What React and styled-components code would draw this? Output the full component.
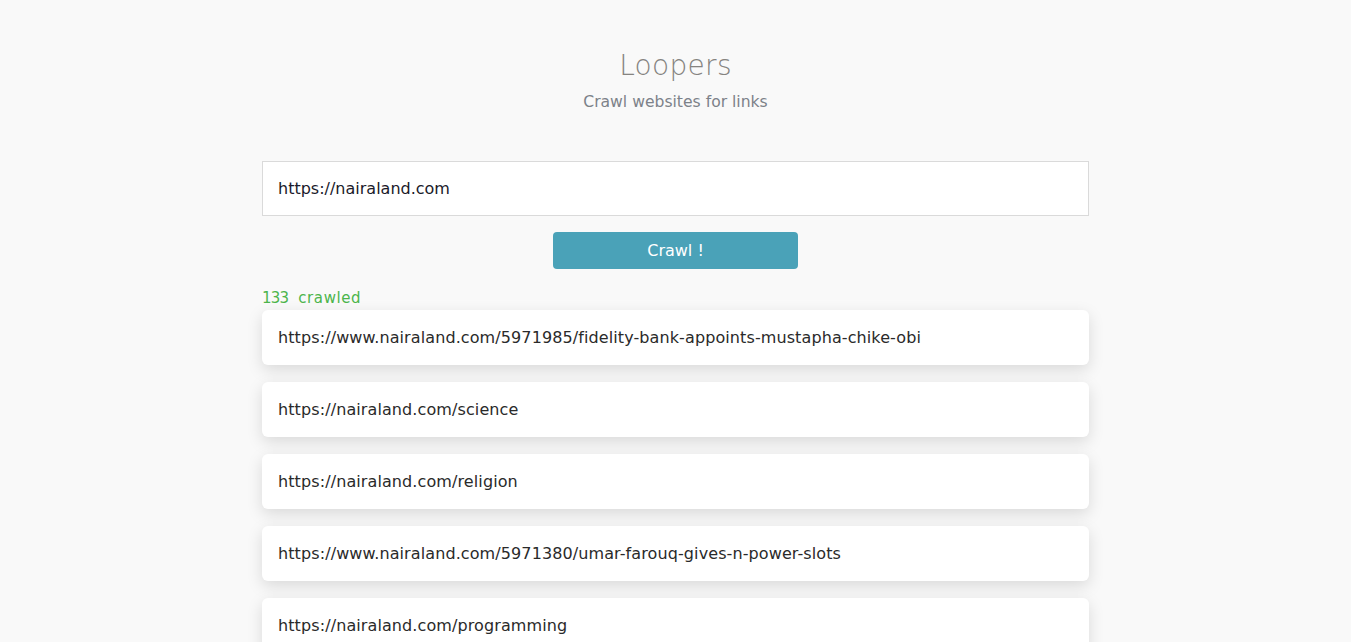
import React from "react";
import styled, { createGlobalStyle } from "styled-components";

const Global = createGlobalStyle`
  html, body { margin: 0; padding: 0; background: #f9f9f9; }
  body { font-family: "DejaVu Sans", "Noto Sans", sans-serif; }
  * { box-sizing: border-box; }
`;

const Page = styled.main`
  width: 827px;
  margin: 0 auto;
  padding-top: 47px;
  display: flex;
  flex-direction: column;
`;

const Header = styled.header`
  text-align: center;
  display: flex;
  flex-direction: column;
  align-items: center;
  gap: 7px;
`;

const Title = styled.h1`
  margin: 0;
  font-size: 28px;
  font-weight: 300;
  color: #858380;
  line-height: 38px;
  letter-spacing: 0.3px;
`;

const Subtitle = styled.p`
  margin: 0;
  font-size: 15.6px;
  color: #7d8289;
  line-height: 20px;
`;

const Form = styled.form`
  margin-top: 49px;
  display: flex;
  flex-direction: column;
  align-items: center;
  gap: 16px;
`;

const UrlInput = styled.input`
  width: 100%;
  height: 55px;
  border: 1px solid #dadada;
  background: #fff;
  padding: 0 15px;
  font-family: inherit;
  font-size: 16px;
  color: #1a1a2a;
  outline: none;
`;

const CrawlButton = styled.button`
  width: 245px;
  height: 37px;
  border: none;
  border-radius: 4px;
  background: #4aa2b8;
  color: #fff;
  font-family: inherit;
  font-size: 16px;
  cursor: pointer;
`;

const Count = styled.div`
  margin-top: 19px;
  display: flex;
  gap: 10px;
  font-size: 15px;
  color: #4cb54c;
  line-height: 20px;
`;

const Number = styled.span`
  letter-spacing: -0.8px;
`;

const Label = styled.span`
  letter-spacing: 0.6px;
`;

const List = styled.ul`
  list-style: none;
  margin: 2px 0 0;
  padding: 0;
  display: flex;
  flex-direction: column;
  gap: 17px;
`;

const Card = styled.li`
  height: 55px;
  background: #fff;
  border-radius: 6px;
  box-shadow: 0 5px 16px rgba(0, 0, 0, 0.13);
  display: flex;
  align-items: center;
  padding: 0 16px;
  font-size: 16px;
  letter-spacing: 0.1px;
  color: #2a2a2a;
`;

const links = [
  "https://www.nairaland.com/5971985/fidelity-bank-appoints-mustapha-chike-obi",
  "https://nairaland.com/science",
  "https://nairaland.com/religion",
  "https://www.nairaland.com/5971380/umar-farouq-gives-n-power-slots",
  "https://nairaland.com/programming",
  "https://nairaland.com/politics",
];

export default function App() {
  return (
    <>
      <Global />
      <Page>
        <Header>
          <Title>Loopers</Title>
          <Subtitle>Crawl websites for links</Subtitle>
        </Header>
        <Form onSubmit={(e) => e.preventDefault()}>
          <UrlInput defaultValue="https://nairaland.com" />
          <CrawlButton type="submit">Crawl !</CrawlButton>
        </Form>
        <Count>
          <Number>133</Number>
          <Label>crawled</Label>
        </Count>
        <List>
          {links.map((l) => (
            <Card key={l}>{l}</Card>
          ))}
        </List>
      </Page>
    </>
  );
}
